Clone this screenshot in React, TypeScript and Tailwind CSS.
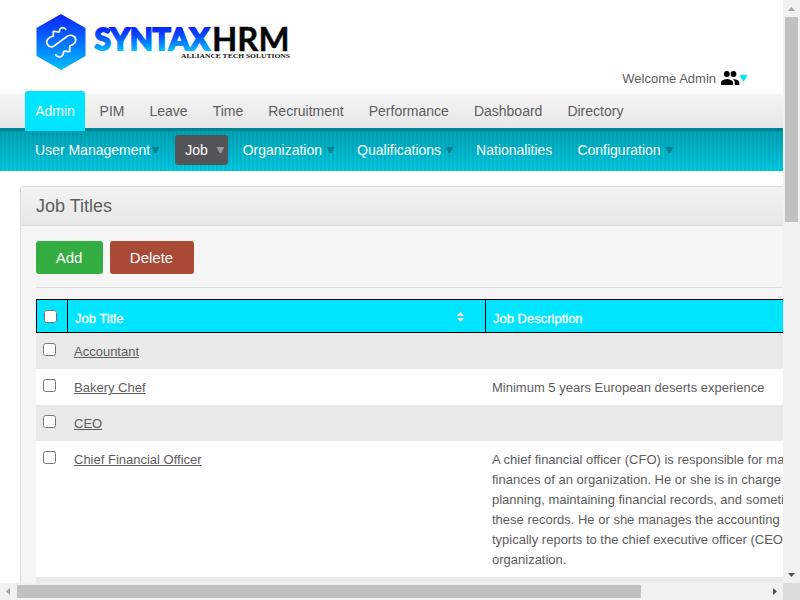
import React from "react";

const mainMenu = ["PIM", "Leave", "Time", "Recruitment", "Performance", "Dashboard", "Directory"];

const rows = [
  { title: "Accountant", lines: [] as string[] },
  { title: "Bakery Chef", lines: ["Minimum 5 years European deserts experience"] },
  { title: "CEO", lines: [] as string[] },
  {
    title: "Chief Financial Officer",
    lines: [
      "A chief financial officer (CFO) is responsible for managing the",
      "finances of an organization. He or she is in charge of financial",
      "planning, maintaining financial records, and sometimes reporting",
      "these records. He or she manages the accounting staff and",
      "typically reports to the chief executive officer (CEO) of the",
      "organization.",
    ],
  },
];

function Arrow({ className }: { className: string }) {
  return (
    <svg width="7" height="6" viewBox="0 0 7 6" className={"shrink-0 " + className}>
      <path d="M0 0H7V1L4.200 6H2.800L0 1Z" fill="currentColor" />
    </svg>
  );
}

function SubItem({ label, arrow }: { label: string; arrow?: string }) {
  return (
    <div className="flex h-[30px] items-center pl-[10px]">
      <span className="whitespace-nowrap">{label}</span>
      {arrow ? (
        <span className="flex w-5">
          <Arrow className={arrow} />
        </span>
      ) : (
        <span className="w-[10px]" />
      )}
    </div>
  );
}

function Box() {
  return <input type="checkbox" className="block h-[13px] w-[13px] shrink-0" />;
}

function Logo() {
  return (
    <svg width="270" height="70" viewBox="30 5 270 70" className="block shrink-0">
      <defs>
        <linearGradient id="hex" x1="0" y1="0" x2="0" y2="1">
          <stop offset="0" stopColor="#0a20ff" />
          <stop offset="1" stopColor="#00c0ff" />
        </linearGradient>
        <linearGradient id="word" gradientUnits="userSpaceOnUse" x1="0" y1="27" x2="0" y2="51">
          <stop offset="0" stopColor="#0a24ff" />
          <stop offset="0.35" stopColor="#0848ff" />
          <stop offset="1" stopColor="#00c0ff" />
        </linearGradient>
      </defs>
      <path d="M61 14L85.500 28V56L61 70L36.500 56V28Z" fill="url(#hex)" />
      <path
        d="M65.700 29.300C63 26.500 59.300 27.500 59.300 32C57 32.500 56 31 53.300 31.500V36C50 37 46.700 38.500 46.700 42C46.700 46 51 48 54 46L67 36.500C71.500 33.500 76 36.500 75.700 40.500C75.400 44 72 45 69.700 46V51.500C67 52 66 50.500 63.700 51.500C63.700 56.500 59 59 55.700 54.900"
        fill="none"
        stroke="white"
        strokeWidth="1.7"
        strokeLinecap="round"
        strokeLinejoin="round"
      />
      <text x="94.500" y="50" fontFamily="Lato, sans-serif" fontWeight="700" fontSize="30.500" textLength="115" lengthAdjust="spacingAndGlyphs" fill="url(#word)" stroke="url(#word)" strokeWidth="2">SYNTAX</text>
      <text x="212" y="50.500" fontFamily="Lato, sans-serif" fontWeight="700" fontSize="31.500" textLength="77.500" lengthAdjust="spacingAndGlyphs" fill="#050505" stroke="#050505" strokeWidth="0.4">HRM</text>
      <text x="181" y="58" fontFamily="'Liberation Serif', serif" fontWeight="700" fontSize="7" textLength="109" lengthAdjust="spacingAndGlyphs" fill="#111">ALLIANCE TECH SOLUTIONS</text>
    </svg>
  );
}

export default function App() {
  return (
    <div className="grid h-[600px] w-[800px] grid-cols-[783px_17px] grid-rows-[583px_17px] overflow-hidden bg-white font-['Liberation_Sans',Arial,sans-serif] text-[13px] text-[#5d5d5d]">
      <div className="flex min-w-0 flex-col overflow-hidden">
        <header className="flex h-[94px] shrink-0 justify-between pt-[5px] pl-[30px]">
          <Logo />
          <div className="mr-[36px] mt-[63px] flex h-5 items-center">
            <span className="-mr-px pl-px pt-[2px]">Welcome Admin</span>
            <svg width="20" height="16" viewBox="0 0 20 16" className="ml-[6px]" fill="black">
              <circle cx="5.800" cy="4" r="2.900" />
              <circle cx="12.500" cy="4" r="2.900" />
              <path d="M0 15V12.500Q0 9.500 6 9Q12 9.500 12 12.500V15ZM12 9Q18.300 9.500 18.300 12.500V15H13.800V12.500Q13.800 10.500 12 9Z" />
            </svg>
            <Arrow className="-ml-px text-[#00e5ff]" />
          </div>
        </header>
        <nav className="flex h-[34px] shrink-0 gap-[5px] bg-gradient-to-b from-[#f4f4f4] to-[#e7e7e7] pl-[25px] text-[14px]">
          <div className="z-10 -mt-[3px] -mr-[0.4px] flex h-10 w-[60px] shrink-0 items-center justify-center rounded-t-[3px] bg-[#00e5ff] text-white">Admin</div>
          {mainMenu.map((m) => (
            <div key={m} className="flex items-center px-[10px]">{m}</div>
          ))}
        </nav>
        <div className="h-[43px] shrink-0 border-t-[3px] border-[#00838f] bg-[repeating-linear-gradient(90deg,rgba(0,90,110,0.12)_0px,rgba(0,90,110,0.12)_2px,transparent_2px,transparent_4px),linear-gradient(#00a0b3,#00cbe3)]">
          <div className="flex gap-[5px] pt-[4px] pl-[25px] text-[14px] text-white">
            <SubItem label="User Management" arrow="ml-[2px] text-[#00808c]" />
            <div className="-mr-[0.5px] flex h-[30px] w-[53px] items-center rounded-[3px] bg-[#555557] pl-[10px]">
              <span>Job</span>
              <Arrow className="ml-[9px] text-[#999]" />
            </div>
            <SubItem label="Organization" arrow="ml-[5px] text-[#00808c]" />
            <SubItem label="Qualifications" arrow="ml-[5px] text-[#00808c]" />
            <SubItem label="Nationalities" />
            <SubItem label="Configuration" arrow="ml-[5px] text-[#00808c]" />
          </div>
        </div>
        <main className="ml-5 mt-[15px] w-[940px] grow overflow-hidden rounded-tl-[3px] border border-b-0 border-[#dcdcdc] bg-[#f5f5f5]">
          <h1 className="flex h-[39px] items-center border-b border-[#dcdcdc] bg-gradient-to-b from-[#f3f3f3] to-[#e7e7e7] pl-[15px] text-[18px]">Job Titles</h1>
          <div className="px-[15px] pt-[15px]">
            <div className="flex h-[47px] gap-[7px] border-b border-[#dcdcdc] text-[15px] text-white">
              <button className="h-[33px] w-[67px] rounded-[3px] bg-[#34ad42] pt-[2px] pr-px">Add</button>
              <button className="h-[33px] w-[84px] rounded-[3px] bg-[#a94a36] pt-[2px] pr-px">Delete</button>
            </div>
            <div className="mt-[11px] grid h-[34px] grid-cols-[31px_418px_1fr] border border-black bg-[#00e5ff] text-white">
              <div className="border-r border-black pl-[7px] pt-[10px]"><Box /></div>
              <div className="flex items-center justify-between border-r border-black pl-[7px] pr-[21px] pt-[5px] [-webkit-text-stroke:0.3px_white]">
                <span>Job Title</span>
                <svg width="7" height="10" viewBox="0 0 7 10" className="-mt-[3px]" fill="#f5dfc8">
                  <path d="M0 4L3.500 0L7 4ZM0 6H7L3.500 10Z" />
                </svg>
              </div>
              <div className="flex items-center pl-[7px] pt-[5px] [-webkit-text-stroke:0.3px_white]">Job Description</div>
            </div>
            {rows.map((r, i) => (
              <div key={r.title} className={"grid grid-cols-[38px_418px_1fr] pt-[9px] pb-[7px] leading-5 " + (i % 2 ? "bg-white" : "bg-[#e9e9e9]")}>
                <div className="pl-[7px] pt-px"><Box /></div>
                <div><a className="underline">{r.title}</a></div>
                <div className="min-h-5 whitespace-nowrap">{r.lines.map((l) => <div key={l}>{l}</div>)}</div>
              </div>
            ))}
            <div className="h-9 bg-[#e9e9e9]" />
          </div>
        </main>
      </div>
      <div className="flex flex-col items-center bg-[#f1f1f1]">
        <svg width="17" height="17"><path d="M5 11L8.500 7L12 11Z" fill="#a3a3a3" /></svg>
        <div className="h-[205px] w-[13px] bg-[#c1c1c1]" />
        <svg width="17" height="17" className="mt-auto"><path d="M5 7H12L8.500 11Z" fill="#505050" /></svg>
      </div>
      <div className="flex items-center bg-[#f1f1f1]">
        <svg width="17" height="17"><path d="M10 5V12L6 8.500Z" fill="#a3a3a3" /></svg>
        <div className="h-[13px] w-[624px] bg-[#c1c1c1]" />
        <svg width="17" height="17" className="ml-auto"><path d="M7 5V12L11 8.500Z" fill="#505050" /></svg>
      </div>
      <div className="bg-[#dcdcdc]" />
    </div>
  );
}
